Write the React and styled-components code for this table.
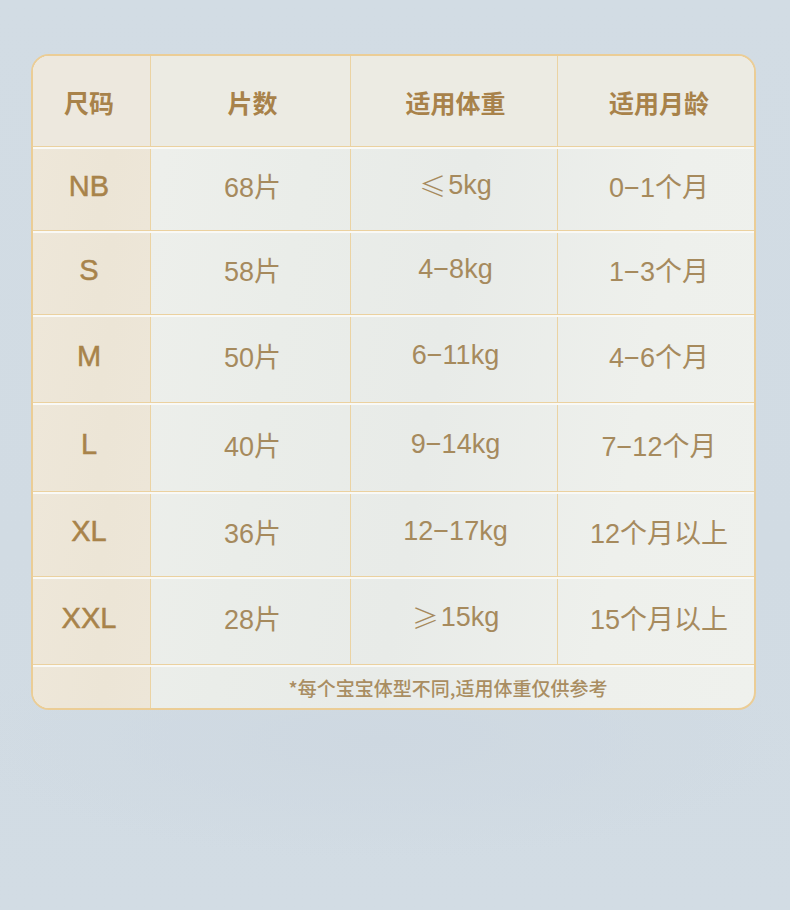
import React from "react";
import styled, { createGlobalStyle, css } from "styled-components";

const GlobalStyle = createGlobalStyle`
  html, body {
    margin: 0;
    padding: 0;
  }
  body {
    background: radial-gradient(ellipse 420px 120px at 380px 740px, #ced8e1 0%, rgba(206,216,225,0) 100%),
      linear-gradient(180deg, #d2dce4 0%, #d1dbe3 60%, #d2dce4 100%);
    min-height: 910px;
    font-family: "Liberation Sans", "Noto Sans CJK SC", sans-serif;
  }
`;

const Page = styled.div`
  padding: 54px 34px 0 31px;
  min-height: 910px;
  box-sizing: border-box;
`;

const Card = styled.div`
  width: 725px;
  box-sizing: border-box;
  border: 2px solid #ebcd96;
  border-radius: 18px;
  overflow: hidden;
  background: linear-gradient(100deg, #f0f1ed 0%, #eaede9 35%, #e8ebe8 55%, #eef0ec 80%, #eff1ed 100%);
`;

const Row = styled.div`
  display: grid;
  grid-template-columns: 118px 200px 207px 1fr;
  box-sizing: border-box;
  height: ${(p) => p.$h}px;
  ${(p) =>
    p.$last
      ? css``
      : css`
          border-bottom: 1px solid #ebd19f;
        `}
  ${(p) =>
    p.$head
      ? css`
          background: #ecebe3;
        `
      : css`
          border-top: 2px solid #f9f9f6;
        `}
`;

/* horizontal nudge of the text centre per column, as in the reference */
const shifts = [-5, 4, 3, 6];

const Cell = styled.div`
  display: flex;
  align-items: center;
  justify-content: center;
  box-sizing: border-box;
  border-right: ${(p) => (p.$end ? "none" : "1px solid #ebd3a3")};
  ${(p) => {
    const s = shifts[p.$col ?? 0];
    return s > 0 ? `padding-left: ${s}px;` : `padding-right: ${-s}px;`;
  }}
  ${(p) => (p.$span ? `grid-column: 2 / 5;` : "")}
`;

const HeadCell = styled(Cell)`
  font-family: "Noto Sans CJK SC", sans-serif;
  font-weight: 700;
  font-size: 25px;
  color: #a8824a;
  padding-top: 1px;
  background: ${(p) => (p.$first ? "#ede8de" : "transparent")};
`;

const SizeCell = styled(Cell)`
  background: linear-gradient(100deg, #eee7d9 0%, #ece5d6 60%, #ede6d8 100%);
  font-size: 29px;
  color: #a8834a;
  -webkit-text-stroke: 0.5px #a8834a;
  padding-bottom: ${(p) => (p.$blank ? 0 : 7)}px;
`;

const ValueCell = styled(Cell)`
  font-size: 27px;
  color: #a68a5d;
  padding-bottom: 8px;
`;

const Sym = styled.span`
  font-family: "Noto Sans CJK SC", sans-serif;
  font-size: 27px;
  font-weight: 300;
  margin-right: 2px;
`;

const Note = styled(Cell)`
  font-family: "Noto Sans CJK SC", sans-serif;
  font-size: 19px;
  font-weight: 500;
  color: #a98d61;
  padding-right: 9px;
  padding-bottom: 1px;
`;

const rows = [
  { size: "NB", count: "68片", sym: "≤", weight: "5kg", age: "0−1个月", h: 84 },
  { size: "S", count: "58片", weight: "4−8kg", age: "1−3个月", h: 84 },
  { size: "M", count: "50片", weight: "6−11kg", age: "4−6个月", h: 88 },
  { size: "L", count: "40片", weight: "9−14kg", age: "7−12个月", h: 89 },
  { size: "XL", count: "36片", weight: "12−17kg", age: "12个月以上", h: 85 },
  { size: "XXL", count: "28片", sym: "≥", weight: "15kg", age: "15个月以上", h: 88 },
];

export default function App() {
  return (
    <>
      <GlobalStyle />
      <Page>
        <Card>
          <Row $head $h={91}>
            <HeadCell $first $col={0}>尺码</HeadCell>
            <HeadCell $col={1}>片数</HeadCell>
            <HeadCell $col={2}>适用体重</HeadCell>
            <HeadCell $end $col={3}>适用月龄</HeadCell>
          </Row>
          {rows.map((r) => (
            <Row key={r.size} $h={r.h}>
              <SizeCell $col={0}>{r.size}</SizeCell>
              <ValueCell $col={1}>{r.count}</ValueCell>
              <ValueCell $col={2}>
                {r.sym && <Sym>{r.sym}</Sym>}
                {r.weight}
              </ValueCell>
              <ValueCell $end $col={3}>{r.age}</ValueCell>
            </Row>
          ))}
          <Row $last $h={43}>
            <SizeCell $blank $col={0} />
            <Note $span $end>*每个宝宝体型不同,适用体重仅供参考</Note>
          </Row>
        </Card>
      </Page>
    </>
  );
}
